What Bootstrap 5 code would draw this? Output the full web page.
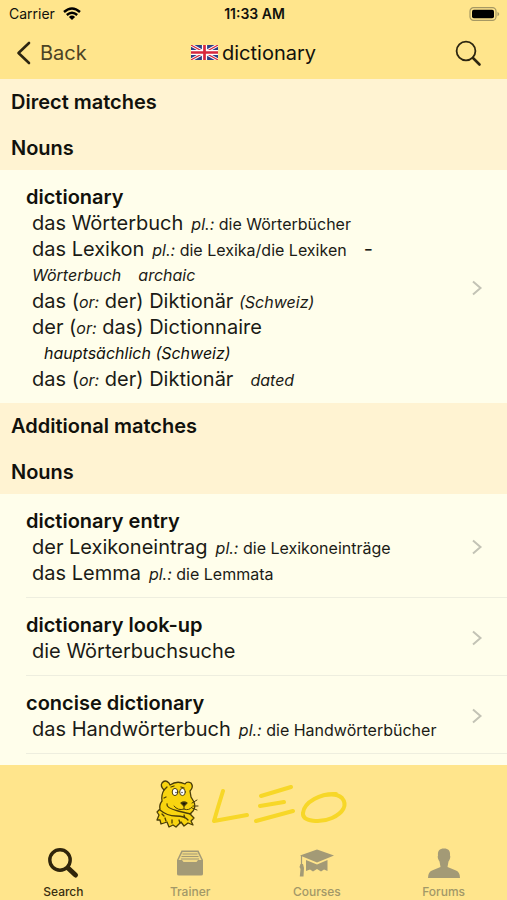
<!DOCTYPE html>
<html lang="en">
<head>
<meta charset="utf-8">
<meta name="viewport" content="width=device-width, initial-scale=1">
<title>LEO dictionary</title>
<link href="https://cdn.jsdelivr.net/npm/bootstrap@5.3.0/dist/css/bootstrap.min.css" rel="stylesheet">
<style>
body { font-family: Inter, "Liberation Sans", sans-serif; background: #fffeeb; color: #11110c; font-size: 20px; line-height: 26px; }
.bar { background: #ffe58c; }
.status { height: 28px; font-size: 14px; line-height: 28px; padding: 0 7px 0 9px; }
.nav-row { height: 51px; padding: 0 16px 2px; }
.nav-row button { line-height: 26px; }
.side { flex: 1 1 0; }
.title { font-size: 20px; line-height: 26px; }
.back { color: #4c4325; }
.section-head, .section-sub { background: #fff3d2; font-size: 20px; font-weight: 600; line-height: 26px; padding: 10px 11px; }
.section-sub { padding-bottom: 9px; }
.entry { margin-left: 26px; padding: 14px 24px 11px 0; color: #11110c; }
.entry-line { border-bottom: 1px solid #eeeedf; }
.entry h3 { font-size: 20px; font-weight: 600; line-height: 26px; }
.sense { padding-left: 6px; color: #1b1b16; }
.minor { font-size: 16px; line-height: 16px; }
.minor-line { font-size: 16px; line-height: 26px; font-style: italic; }
.gap-s { margin-left: 8px; }
.gap-m { margin-left: 17px; }
.inset { padding-left: 18px; }
.logo-row { height: 77px; }
.tab { color: #a29868; font-size: 12px; line-height: 16px; font-weight: 500; }
.tab-on { color: #3a2f10; }
</style>
<script src="https://cdn.jsdelivr.net/npm/bootstrap@5.3.0/dist/js/bootstrap.bundle.min.js"></script>
</head>
<body class="d-flex flex-column min-vh-100">
<header class="bar sticky-top">
  <div class="status d-flex align-items-center">
    <div class="side d-flex align-items-center gap-2">
      <span>Carrier</span>
      <svg width="18" height="14" viewBox="0 0 18 14" fill="none" stroke="#000" stroke-width="2.4" aria-hidden="true"><path d="M1 5Q9-2 17 5M3.800 8Q9 3.400 14.200 8"/><path d="M9 13 5.900 9.900Q9 7.300 12.100 9.900Z" fill="#000" stroke="none"/></svg>
    </div>
    <span class="fw-semibold">11:33 AM</span>
    <div class="side d-flex justify-content-end">
      <svg width="31" height="14" viewBox="0 0 31 14" role="img" aria-label="Battery full"><rect x="1" y=".7" width="26" height="12.600" rx="3.600" fill="none" stroke="#a69863" stroke-width="1.200"/><rect x="3" y="2.700" width="22" height="8.600" rx="1.800"/><path d="M28.500 4.700Q32 7 28.500 9.300Z" fill="#a69863"/></svg>
    </div>
  </div>
  <div class="nav-row d-flex align-items-center">
    <div class="side d-flex">
      <button type="button" class="back btn border-0 p-0 fs-5 d-flex align-items-center gap-2">
        <svg width="16" height="26" viewBox="0 0 16 26" fill="none" stroke="#2d2611" stroke-width="2.600" stroke-linecap="round" stroke-linejoin="round" aria-hidden="true"><path d="M13 3 2.500 13 13 23"/></svg>
        Back
      </button>
    </div>
    <div class="d-flex align-items-center gap-1">
      <svg width="27" height="15" viewBox="0 0 28 16" preserveAspectRatio="none" role="img" aria-label="English"><rect width="28" height="16" rx="1" fill="#2c3f86"/><path d="M0 0 28 16M28 0 0 16" stroke="#fff" stroke-width="3.400"/><path d="M0 0 28 16M28 0 0 16" stroke="#d8283c" stroke-width="1.200"/><path d="M14 0V16M0 8H28" stroke="#fff" stroke-width="5.400"/><path d="M14 0V16M0 8H28" stroke="#d8283c" stroke-width="2.800"/></svg>
      <h1 class="title fw-normal mb-0">dictionary</h1>
    </div>
    <div class="side d-flex justify-content-end">
      <button type="button" class="btn border-0 p-0 me-2 d-flex" aria-label="Search">
        <svg width="28" height="28" viewBox="0 0 28 28" fill="none" stroke="#2d2611" aria-hidden="true"><circle cx="11" cy="12" r="9.400" stroke-width="1.800"/><path d="m18 19 6.500 6.500" stroke-width="2.600" stroke-linecap="round"/></svg>
      </button>
    </div>
  </div>
</header>

<main class="flex-grow-1">
  <h2 class="section-head mb-0">Direct matches</h2>
  <h3 class="section-sub mb-0">Nouns</h3>
  <a href="#" class="entry d-flex align-items-center text-decoration-none">
    <div class="flex-grow-1">
      <h3 class="mb-0">dictionary</h3>
      <div class="sense">das Wörterbuch<span class="minor gap-s"><i>pl.:</i> die Wörterbücher</span></div>
      <div class="sense">das Lexikon<span class="minor gap-s"><i>pl.:</i> die Lexika/die Lexiken</span><span class="gap-m">-</span></div>
      <div class="sense minor-line">Wörterbuch<span class="gap-m">archaic</span></div>
      <div class="sense">das (<i class="minor">or:</i> der) Diktionär <i class="minor">(Schweiz)</i></div>
      <div class="sense">der (<i class="minor">or:</i> das) Dictionnaire</div>
      <div class="inset minor-line">hauptsächlich (Schweiz)</div>
      <div class="sense">das (<i class="minor">or:</i> der) Diktionär<i class="minor gap-m">dated</i></div>
    </div>
    <svg class="flex-shrink-0" width="12" height="18" viewBox="0 0 12 18" fill="none" stroke="#c3c3b5" stroke-width="2" aria-hidden="true"><path d="m2 2.500 7.500 6.500L2 15.500"/></svg>
  </a>

  <h2 class="section-head mb-0">Additional matches</h2>
  <h3 class="section-sub mb-0">Nouns</h3>
  <a href="#" class="entry entry-line d-flex align-items-center text-decoration-none">
    <div class="flex-grow-1">
      <h3 class="mb-0">dictionary entry</h3>
      <div class="sense">der Lexikoneintrag<span class="minor gap-s"><i>pl.:</i> die Lexikoneinträge</span></div>
      <div class="sense">das Lemma<span class="minor gap-s"><i>pl.:</i> die Lemmata</span></div>
    </div>
    <svg class="flex-shrink-0" width="12" height="18" viewBox="0 0 12 18" fill="none" stroke="#c3c3b5" stroke-width="2" aria-hidden="true"><path d="m2 2.500 7.500 6.500L2 15.500"/></svg>
  </a>
  <a href="#" class="entry entry-line d-flex align-items-center text-decoration-none">
    <div class="flex-grow-1">
      <h3 class="mb-0">dictionary look-up</h3>
      <div class="sense">die Wörterbuchsuche</div>
    </div>
    <svg class="flex-shrink-0" width="12" height="18" viewBox="0 0 12 18" fill="none" stroke="#c3c3b5" stroke-width="2" aria-hidden="true"><path d="m2 2.500 7.500 6.500L2 15.500"/></svg>
  </a>
  <a href="#" class="entry entry-line d-flex align-items-center text-decoration-none">
    <div class="flex-grow-1">
      <h3 class="mb-0">concise dictionary</h3>
      <div class="sense">das Handwörterbuch<span class="minor gap-s"><i>pl.:</i> die Handwörterbücher</span></div>
    </div>
    <svg class="flex-shrink-0" width="12" height="18" viewBox="0 0 12 18" fill="none" stroke="#c3c3b5" stroke-width="2" aria-hidden="true"><path d="m2 2.500 7.500 6.500L2 15.500"/></svg>
  </a>
</main>

<footer class="bar sticky-bottom">
  <div class="logo-row d-flex justify-content-center align-items-center">
    <svg width="196" height="52" viewBox="0 0 196 52" role="img" aria-label="LEO">
      <g stroke="#4a3d08" stroke-width="1.300" stroke-linejoin="round" stroke-linecap="round" fill="#f8d410">
        <path d="M8 12Q4 8 6 5Q9 1 13 5L14 7Q21 2 29 6Q31 3 35 5Q38 9 34 13L35 19L38 24Q40 29 37 33L34 36L38 40L35 43L37 47L32 45L28 48L25 44L20 49L17 47L13 49L11 44L5 46L4 42L1 42L3 37L1 34L4 31Q3 27 6 23Q5 17 8 12Z"/>
        <path d="M8 12 11 9M8 20 10 19M15 9 18 8M25 9 28 10M11 26Q10 30 22 33T35 36M4 32Q11 38 20 38T32 42M9 40 10 43M16 42V45M23 42 24 45M6 36 8 38M28 37 29 40" fill="none"/>
        <ellipse cx="19" cy="14" rx="2.800" ry="3.600" fill="#fff" stroke-width="1"/><ellipse cx="26.500" cy="14" rx="2.800" ry="3.600" fill="#fff" stroke-width="1"/>
        <circle cx="20" cy="14.500" r=".7" fill="#222" stroke="none"/><circle cx="26" cy="14.500" r=".7" fill="#222" stroke="none"/>
        <path d="M25 25Q28 23 31 25L28 28Z" fill="#191506"/>
        <path d="M28 28V31M18 28Q22 33 28 31Q33 33 36 29M36 25 41 22M37 28H42M36 30 41 32" stroke-width="1" fill="none"/>
      </g>
      <g fill="none" stroke="#f7d728" stroke-width="4" stroke-linecap="round" stroke-linejoin="round">
        <path d="M67 13Q62 29 58 43L91 37M105 18 135 9M104 28 128 24M100 43 137 33"/>
        <path d="M180 16C165 15 148 24 147 35C146 44 165 45 176 40C187 35 192 27 186 20Q181 15 169 17"/>
      </g>
    </svg>
  </div>
  <nav class="row g-0 text-center" aria-label="Main">
    <a href="#" class="tab tab-on col d-flex flex-column align-items-center text-decoration-none" aria-current="page">
      <svg width="34" height="42" viewBox="0 0 34 42" fill="none" stroke="#30250b" aria-hidden="true"><circle cx="14" cy="18" r="10.200" stroke-width="3.400"/><path d="m22 26 7.500 7" stroke-width="5" stroke-linecap="round"/></svg>
      Search
    </a>
    <a href="#" class="tab col d-flex flex-column align-items-center text-decoration-none">
      <svg width="34" height="42" viewBox="0 0 34 42" aria-hidden="true"><path d="M4 18 8.500 8.500H25.500L30 18V32Q30 33.500 28 33.500H6Q4 33.500 4 32Z" fill="#a39a76"/><path d="M5.500 18 9.500 10H24.500L28.500 18H25L23.500 20H10.500L9 18Z" fill="#f0d885"/><path d="M9.500 12H24.500M8.500 14.500H25.500M8 17H26" stroke="#a39a76"/></svg>
      Trainer
    </a>
    <a href="#" class="tab col d-flex flex-column align-items-center text-decoration-none">
      <svg width="36" height="42" viewBox="0 0 36 42" fill="#a39a76" aria-hidden="true"><path d="M18 7.500 35 13.500 18 20.500 1 13.500Z"/><path d="M7 18 18 22.500 28.500 18V29L25 27.500 22 29.500 18 27 14 29.500 11 27.500 7 29Z"/><path d="M2.500 14V24" stroke="#a39a76" stroke-width="1.200"/><path d="M1.500 22H4L5 26 4.500 34.500H.8L1.500 27 .5 25Z"/></svg>
      Courses
    </a>
    <a href="#" class="tab col d-flex flex-column align-items-center text-decoration-none">
      <svg width="34" height="42" viewBox="0 0 34 42" fill="#a39a76" aria-hidden="true"><path d="M17 6.500C21.500 6.500 23.500 9 23 13.500C24 15 22.500 18 21.500 19.500L20.500 25L29 28.500Q33 30 33 36H1Q1 30 5 28.500L13.500 25L12.500 19.500C11.500 18 10 15 11 13.500C10.500 9 12.500 6.500 17 6.500Z"/></svg>
      Forums
    </a>
  </nav>
</footer>
</body>
</html>
